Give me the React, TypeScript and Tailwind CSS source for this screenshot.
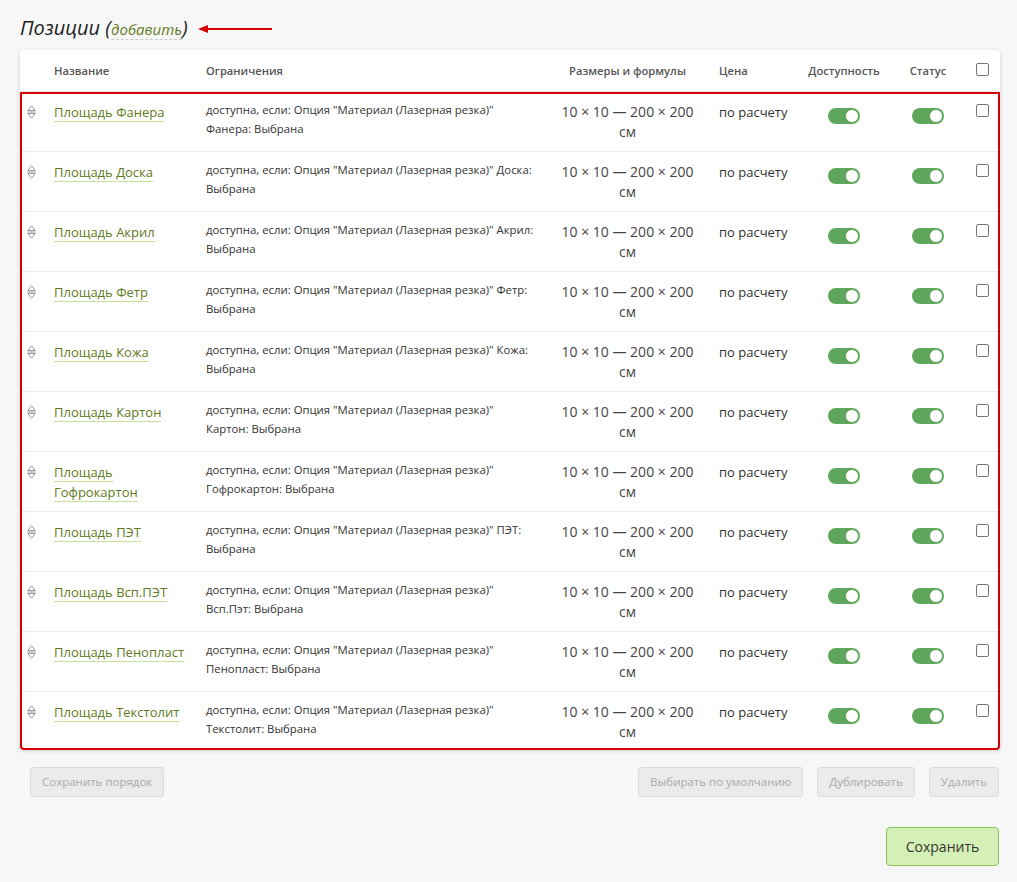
import React from "react"

const rows = [
  { name: "Площадь Фанера", option: "Фанера" },
  { name: "Площадь Доска", option: "Доска" },
  { name: "Площадь Акрил", option: "Акрил" },
  { name: "Площадь Фетр", option: "Фетр" },
  { name: "Площадь Кожа", option: "Кожа" },
  { name: "Площадь Картон", option: "Картон" },
  { name: "Площадь Гофрокартон", option: "Гофрокартон" },
  { name: "Площадь ПЭТ", option: "ПЭТ" },
  { name: "Площадь Всп.ПЭТ", option: "Всп.Пэт" },
  { name: "Площадь Пенопласт", option: "Пенопласт" },
  { name: "Площадь Текстолит", option: "Текстолит" },
]

const cols = "grid grid-cols-[34px_152px_342px_159px_93px_88px_80px_32px]"

function DragIcon() {
  return (
    <svg width="9" height="14" viewBox="0 0 9 14" fill="none" stroke="#9a9a9a" strokeWidth="1">
      <path d="M4.5 0.8 L8.2 5.5 H0.8 Z" />
      <path d="M0.5 7 H8.5" />
      <path d="M0.8 8.5 H8.2 L4.5 13.2 Z" />
    </svg>
  )
}

function Toggle() {
  return (
    <div className="relative h-[16px] w-[32px] rounded-full bg-[#5ea65c]">
      <div className="absolute right-[1px] top-[1px] h-[14px] w-[14px] rounded-full border border-[#5ea65c] bg-white" />
    </div>
  )
}

function Checkbox() {
  return <div className="h-[13px] w-[13px] rounded-[2px] border border-[#767676] bg-white" />
}

function Button({ children }: { children: React.ReactNode }) {
  return (
    <button className="h-[30px] rounded-[3px] border border-[#dcdcdc] bg-[#ebebeb] px-[11px] text-[11.5px] text-[#a9a9a9]">
      {children}
    </button>
  )
}

export default function App() {
  return (
    <div
      className="min-h-[882px] bg-[#f7f7f7] pl-[20px] pr-[17px] pt-[14px] text-[#333]"
      style={{ fontFamily: '"Open Sans", "Noto Sans", sans-serif' }}
    >
      {/* Title */}
      <div className="flex items-center">
        <h1 className="text-[20px] italic leading-[28px] text-[#222]">
          Позиции (
          <a href="#" className="border-b border-dashed border-[#c8c8c8] text-[15px] text-[#5f7a22]">
            добавить
          </a>
          )
        </h1>
        <svg className="ml-[10px]" width="76" height="10" viewBox="0 0 76 10">
          <path d="M0 5 L10 1 L10 9 Z" fill="#d40000" />
          <path d="M9 5 H74" stroke="#d40000" strokeWidth="2" />
        </svg>
      </div>

      {/* Table card */}
      <div className="mt-[7px] w-[980px] rounded-[4px] bg-white shadow-[0_1px_4px_rgba(0,0,0,0.16)]">
        <div className={`${cols} h-[42px] border-b border-[#ececec] text-[11.2px] font-semibold text-[#555]`}>
          <div />
          <div className="pt-[13px]">Название</div>
          <div className="pt-[13px]">Ограничения</div>
          <div className="pt-[13px] text-center">Размеры и формулы</div>
          <div className="pl-[12px] pt-[13px]">Цена</div>
          <div className="pt-[13px] text-center">Доступность</div>
          <div className="pt-[13px] text-center">Статус</div>
          <div className="pl-[8px] pt-[13px]">
            <Checkbox />
          </div>
        </div>

        <div className="rounded-b-[4px] outline-2 -outline-offset-2 outline-[#d40000]">
          {rows.map((row, i) => (
            <div
              key={row.name}
              className={`${cols} ${i < rows.length - 1 ? "h-[60px] border-b border-[#ececec]" : "h-[58px]"}`}
            >
              <div className="pl-[7px] pt-[13px]">
                <DragIcon />
              </div>
              <div className="pr-[16px] pt-[10px] text-[13px] leading-[20px]">
                <a href="#" className="border-b border-[#c3e296] text-[#5f7a22]">
                  {row.name}
                </a>
              </div>
              <div className="pr-[13px] pt-[8px] text-[11.35px] leading-[19px] text-[#333]">
                доступна, если: Опция "Материал (Лазерная резка)" {row.option}: Выбрана
              </div>
              <div className="px-[9px] pt-[10px] text-center text-[14px] leading-[20px] text-[#444]">
                10 × 10 — 200 × 200 см
              </div>
              <div className="pl-[12px] pt-[10px] text-[13px] leading-[20px]">по расчету</div>
              <div className="flex justify-center pt-[16px]">
                <Toggle />
              </div>
              <div className="flex justify-center pt-[16px]">
                <Toggle />
              </div>
              <div className="pl-[8px] pt-[12px]">
                <Checkbox />
              </div>
            </div>
          ))}
        </div>
      </div>

      {/* Actions */}
      <div className="mt-[17px] flex w-[980px] items-center pl-[10px] pr-[1px]">
        <Button>Сохранить порядок</Button>
        <div className="ml-auto flex gap-[14px]">
          <Button>Выбирать по умолчанию</Button>
          <Button>Дублировать</Button>
          <Button>Удалить</Button>
        </div>
      </div>

      <div className="mt-[30px] flex w-[980px] justify-end pr-[1px]">
        <button className="h-[39px] w-[113px] rounded-[4px] border border-[#8dbf5b] bg-[#d4f0b6] text-[14px] text-[#333]">
          Сохранить
        </button>
      </div>
    </div>
  )
}
